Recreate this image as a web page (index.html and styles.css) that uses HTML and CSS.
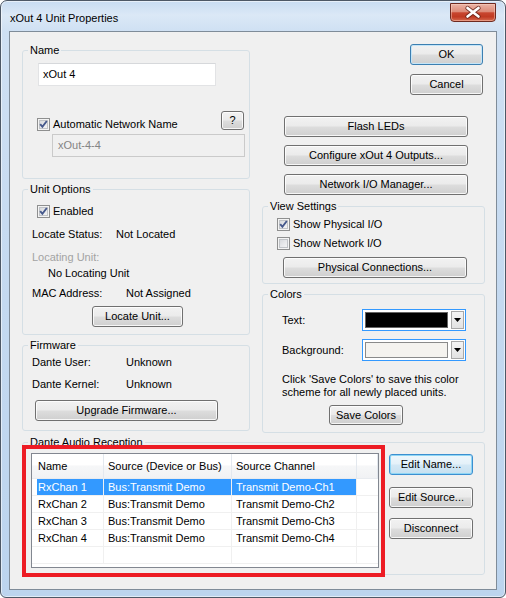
FILE: index.html
```html
<!DOCTYPE html>
<html lang="en">
<head>
<meta charset="utf-8">
<title>xOut 4 Unit Properties</title>
<link rel="stylesheet" href="styles.css">
</head>
<body>
<div class="window">
  <div class="titlebar">
    <span class="title">xOut 4 Unit Properties</span>
    <button class="close" aria-label="Close">
      <svg width="44" height="17" viewBox="0 0 44 17">
        <path d="M16.5 4 L27.5 12.5 M27.5 4 L16.5 12.5" stroke="#5b1d14" stroke-width="4.4" stroke-linecap="round" fill="none" opacity="0.75"/>
        <path d="M16.5 4 L27.5 12.5 M27.5 4 L16.5 12.5" stroke="#ffffff" stroke-width="2.6" stroke-linecap="round" fill="none"/>
      </svg>
    </button>
  </div>

  <div class="client">
    <div class="top">
      <div class="col col-left">
        <fieldset class="group g-name">
          <legend>Name</legend>
          <div class="edit name-input">xOut 4</div>
          <div class="auto-row">
            <label class="check">
              <span class="cb"><svg width="11" height="11" viewBox="0 0 11 11"><polyline points="2.2,5.2 4.4,7.8 8.8,2" fill="none" stroke="#46598c" stroke-width="1.9"/></svg></span>
              Automatic Network Name
            </label>
            <button class="btn help">?</button>
          </div>
          <div class="edit disabled net-name">xOut-4-4</div>
        </fieldset>

        <fieldset class="group g-unit">
          <legend>Unit Options</legend>
          <label class="check enabled-row">
            <span class="cb"><svg width="11" height="11" viewBox="0 0 11 11"><polyline points="2.2,5.2 4.4,7.8 8.8,2" fill="none" stroke="#46598c" stroke-width="1.9"/></svg></span>
            Enabled
          </label>
          <div class="info locate-status"><span class="k k84">Locate Status:</span><span>Not Located</span></div>
          <div class="info muted locating">Locating Unit:</div>
          <div class="info locating-value">No Locating Unit</div>
          <div class="info mac"><span class="k k94">MAC Address:</span><span>Not Assigned</span></div>
          <button class="btn locate-btn">Locate Unit...</button>
        </fieldset>

        <fieldset class="group g-firmware">
          <legend>Firmware</legend>
          <div class="info fw-user"><span class="k k94">Dante User:</span><span>Unknown</span></div>
          <div class="info fw-kernel"><span class="k k94">Dante Kernel:</span><span>Unknown</span></div>
          <button class="btn upgrade-btn">Upgrade Firmware...</button>
        </fieldset>
      </div>

      <div class="col col-right">
        <button class="btn default ok-btn">OK</button>
        <button class="btn cancel-btn">Cancel</button>
        <button class="btn action-btn flash-btn">Flash LEDs</button>
        <button class="btn action-btn">Configure xOut 4 Outputs...</button>
        <button class="btn action-btn">Network I/O Manager...</button>

        <fieldset class="group g-view">
          <legend>View Settings</legend>
          <label class="check view-row">
            <span class="cb"><svg width="11" height="11" viewBox="0 0 11 11"><polyline points="2.2,5.2 4.4,7.8 8.8,2" fill="none" stroke="#46598c" stroke-width="1.9"/></svg></span>
            Show Physical I/O
          </label>
          <label class="check view-row">
            <span class="cb"></span>
            Show Network I/O
          </label>
          <button class="btn phys-btn">Physical Connections...</button>
        </fieldset>

        <fieldset class="group g-colors">
          <legend>Colors</legend>
          <div class="color-row">
            <span class="color-label">Text:</span>
            <div class="combo">
              <span class="swatch swatch-black"></span>
              <span class="drop"><svg width="7" height="4" viewBox="0 0 7 4"><polygon points="0,0 7,0 3.5,4" fill="#000"/></svg></span>
            </div>
          </div>
          <div class="color-row">
            <span class="color-label">Background:</span>
            <div class="combo">
              <span class="swatch swatch-cream"></span>
              <span class="drop"><svg width="7" height="4" viewBox="0 0 7 4"><polygon points="0,0 7,0 3.5,4" fill="#000"/></svg></span>
            </div>
          </div>
          <p class="color-note">Click 'Save Colors' to save this color<br>scheme for all newly placed units.</p>
          <button class="btn save-btn">Save Colors</button>
        </fieldset>
      </div>
    </div>

    <fieldset class="group g-dante">
      <legend>Dante Audio Reception</legend>
      <div class="dante-body">
        <div class="listview">
          <div class="lv-row lv-head">
            <span class="c c1">Name</span>
            <span class="c c2">Source (Device or Bus)</span>
            <span class="c c3">Source Channel</span>
            <span class="c c4"></span>
          </div>
          <div class="lv-row selected">
            <span class="c c1">RxChan 1</span>
            <span class="c c2">Bus:Transmit Demo</span>
            <span class="c c3">Transmit Demo-Ch1</span>
            <span class="c c4"></span>
          </div>
          <div class="lv-row">
            <span class="c c1">RxChan 2</span>
            <span class="c c2">Bus:Transmit Demo</span>
            <span class="c c3">Transmit Demo-Ch2</span>
            <span class="c c4"></span>
          </div>
          <div class="lv-row">
            <span class="c c1">RxChan 3</span>
            <span class="c c2">Bus:Transmit Demo</span>
            <span class="c c3">Transmit Demo-Ch3</span>
            <span class="c c4"></span>
          </div>
          <div class="lv-row">
            <span class="c c1">RxChan 4</span>
            <span class="c c2">Bus:Transmit Demo</span>
            <span class="c c3">Transmit Demo-Ch4</span>
            <span class="c c4"></span>
          </div>
          <div class="lv-row">
            <span class="c c1"></span>
            <span class="c c2"></span>
            <span class="c c3"></span>
            <span class="c c4"></span>
          </div>
        </div>
        <div class="side-btns">
          <button class="btn focus edit-name">Edit Name...</button>
          <button class="btn edit-source">Edit Source...</button>
          <button class="btn disconnect">Disconnect</button>
        </div>
      </div>
    </fieldset>

    <div class="highlight"></div>
  </div>
</div>
</body>
</html>
```

FILE: styles.css
```css
* { box-sizing: border-box; }

html, body {
  margin: 0;
  padding: 0;
  background: #ffffff;
}

body {
  font-family: Tahoma, "Liberation Sans", Arial, sans-serif;
  font-size: 11px;
  color: #000;
}

/* ---------- window frame ---------- */
.window {
  width: 506px;
  height: 598px;
  border: 1px solid #4d5866;
  border-radius: 7px 7px 6px 6px;
  padding: 0 8px 7px 8px;
  display: flex;
  flex-direction: column;
  background: linear-gradient(to bottom, #c8dcf2 0px, #dbe8f6 14px, #cfe0f3 30px, #c4d9f0 300px, #bcd4ee 100%);
  box-shadow: inset 0 0 0 1px rgba(255, 255, 255, 0.55);
  overflow: hidden;
}

.titlebar {
  height: 30px;
  display: flex;
  align-items: flex-start;
}

.title {
  font-family: "Segoe UI", "Liberation Sans", Arial, sans-serif;
  font-size: 11px;
  line-height: 16px;
  margin: 9px 0 0 1px;
  color: #000;
}

.close {
  margin: 2px 1px 0 auto;
  width: 46px;
  height: 19px;
  padding: 0;
  border: 1px solid #6e2a20;
  border-radius: 0 0 4px 4px;
  background: linear-gradient(to bottom, #ebb4a6 0%, #dd8b78 45%, #c8462f 52%, #c03a22 75%, #d66a4e 100%);
  box-shadow: inset 0 0 0 1px rgba(255, 215, 200, 0.45);
  display: flex;
  align-items: center;
  justify-content: center;
}

.close svg { display: block; }

/* ---------- client area ---------- */
.client {
  flex: 1;
  position: relative;
  background: #f0f0f0;
  border: 1px solid #7f8c99;
  padding: 12px 11px 0 12px;
}

.top {
  display: flex;
  gap: 12px;
  align-items: flex-start;
}

.col {
  display: flex;
  flex-direction: column;
}

.col-left {
  width: 228px;
  gap: 4px;
}

.col-right {
  width: 223px;
}

/* ---------- group boxes ---------- */
.group {
  margin: 0;
  padding: 0;
  min-width: 0;
  border: 1px solid #d5dfe5;
  border-radius: 3px;
}

.group legend {
  margin-left: 5px;
  padding: 0 2px;
  height: 12px;
  line-height: 12px;
  font-size: 11px;
}

.g-name { height: 135px; }
.g-unit { height: 152px; }
.g-firmware { height: 92px; }
.g-view { height: 84px; margin-top: 5px; }
.g-colors { height: 145px; margin-top: 4px; }
.g-dante { height: 139px; margin-top: 3px; }

/* ---------- buttons ---------- */
.btn {
  display: block;
  font: inherit;
  color: #000;
  padding: 0;
  height: 21px;
  line-height: 19px;
  text-align: center;
  border: 1px solid #707070;
  border-radius: 3px;
  background: linear-gradient(to bottom, #f2f2f2 0%, #ebebeb 48%, #dddddd 52%, #cfcfcf 100%);
  box-shadow: inset 0 0 0 1px rgba(255, 255, 255, 0.8);
}

.btn.default {
  border-color: #3c7fb1;
  box-shadow: inset 0 0 0 1px #c4e5f8;
}

.btn.focus {
  border-color: #3c8fd0;
  background: linear-gradient(to bottom, #eef7fc 0%, #e4f1f9 48%, #d3e8f5 52%, #c6e0f0 100%);
  box-shadow: inset 0 0 0 1px #8fd6f5;
}

.ok-btn, .cancel-btn {
  width: 73px;
  align-self: flex-end;
  margin-right: 2px;
}

.cancel-btn { margin-top: 9px; }

.action-btn {
  width: 184px;
  margin: 8px 0 0 22px;
}

.flash-btn { margin-top: 21px; }

/* ---------- edit fields ---------- */
.edit {
  height: 23px;
  line-height: 21px;
  background: #fff;
  border: 1px solid #e2e3e5;
  border-top-color: #d6d8db;
  padding-left: 4px;
  white-space: nowrap;
}

.edit.disabled {
  background: #f0f0f0;
  border-color: #cacaca;
  color: #848484;
  padding-left: 5px;
}

.name-input {
  width: 178px;
  margin: 7px 0 0 15px;
}

.net-name {
  width: 193px;
  margin: 3px 0 0 29px;
}

/* ---------- check boxes ---------- */
.check {
  display: flex;
  align-items: center;
  gap: 3px;
  height: 13px;
  line-height: 13px;
  white-space: nowrap;
}

.cb {
  flex: none;
  width: 13px;
  height: 13px;
  border: 1px solid #8e8f8f;
  background: linear-gradient(135deg, #cfd2d6 0%, #e9eaec 55%, #f8f8f8 100%);
  box-shadow: inset 0 0 0 1px #f4f4f4, inset 0 0 0 2px #c0c3c7;
  display: flex;
  align-items: center;
  justify-content: center;
}

.cb svg { display: block; }

.auto-row {
  display: flex;
  height: 20px;
  margin-top: 25px;
  padding: 0 5px 0 14px;
}

.auto-row .check { align-self: flex-end; }

.help {
  margin-left: auto;
  width: 23px;
  height: 19px;
  line-height: 17px;
}

/* ---------- info rows ---------- */
.info {
  display: flex;
  line-height: 13px;
  margin-left: 9px;
  white-space: nowrap;
}

.k84 { width: 84px; }
.k94 { width: 94px; }

.muted { color: #a3a3a3; }

.enabled-row { margin: 10px 0 0 14px; }
.locate-status { margin-top: 10px; }
.locating { margin-top: 10px; }
.locating-value { margin: 3px 0 0 25px; }
.mac { margin-top: 7px; }

.locate-btn {
  width: 91px;
  margin: 6px 0 0 69px;
}

.fw-user { margin-top: 5px; }
.fw-kernel { margin-top: 9px; }

.upgrade-btn {
  width: 183px;
  margin: 9px 0 0 12px;
}

/* ---------- view settings ---------- */
.view-row { margin: 6px 0 0 14px; }

.phys-btn {
  width: 184px;
  margin: 7px 0 0 20px;
}

/* ---------- colors ---------- */
.color-row {
  display: flex;
  align-items: center;
  height: 22px;
  margin: 9px 0 0 19px;
}

.color-row + .color-row { margin-top: 8px; }

.color-label { width: 80px; }

.combo {
  width: 104px;
  height: 22px;
  display: flex;
  align-items: center;
  padding: 0 1px 0 2px;
  background: #fff;
  border: 1px solid #3399ff;
}

.swatch {
  width: 83px;
  height: 16px;
  border: 1px solid #646464;
}

.swatch-black { background: #000; }
.swatch-cream { background: #f5f3ef; border-color: #8a8a8a; }

.drop {
  margin-left: auto;
  width: 13px;
  height: 18px;
  border: 1px solid #a8a8a8;
  background: linear-gradient(to bottom, #f4f4f4, #e2e2e2);
  display: flex;
  align-items: center;
  justify-content: center;
}

.drop svg { display: block; }

.color-note {
  margin: 12px 0 0 19px;
  line-height: 13px;
  white-space: nowrap;
}

.save-btn {
  width: 74px;
  height: 20px;
  line-height: 18px;
  margin: 6px 0 0 66px;
}

/* ---------- dante list ---------- */
.dante-body {
  display: flex;
  align-items: flex-start;
  margin: 5px 0 0 8px;
}

.listview {
  width: 348px;
  height: 115px;
  background: #fff;
  border: 1px solid #828790;
}

.lv-row {
  display: grid;
  grid-template-columns: 72px 128px 125px 21px;
  height: 17px;
}

.lv-row .c {
  border-right: 1px solid #f0f0f0;
  border-bottom: 1px solid #f0f0f0;
  line-height: 16px;
  padding-left: 4px;
  white-space: nowrap;
  overflow: hidden;
  background-clip: padding-box;
}

.lv-row .c1 { padding-left: 6px; }
.lv-row .c4 { border-right: 0; }

.lv-head {
  height: 25px;
}

.lv-head .c {
  line-height: 24px;
  border-right-color: #e3e8ee;
  border-bottom-color: #e8ebef;
  background: linear-gradient(to bottom, #ffffff 0%, #ffffff 45%, #f6f7f8 50%, #f1f2f4 100%);
}

.lv-head .c4 { border-right: 1px solid #e3e8ee; }

.selected .c1 {
  color: #fff;
  background: linear-gradient(to right, transparent 5px, #3399ff 5px);
  background-clip: padding-box;
}

.selected .c2,
.selected .c3 {
  color: #fff;
  background: #3399ff;
  background-clip: padding-box;
}

.side-btns {
  display: flex;
  flex-direction: column;
  margin: 1px 0 0 10px;
}

.side-btns .btn { width: 84px; }
.edit-source { margin-top: 12px; }
.disconnect { margin-top: 10px; }

/* annotation frame drawn over the reception list */
.highlight {
  position: absolute;
  left: 12px;
  top: 413px;
  width: 363px;
  height: 132px;
  border: 4px solid #ed1c24;
  pointer-events: none;
}
```
